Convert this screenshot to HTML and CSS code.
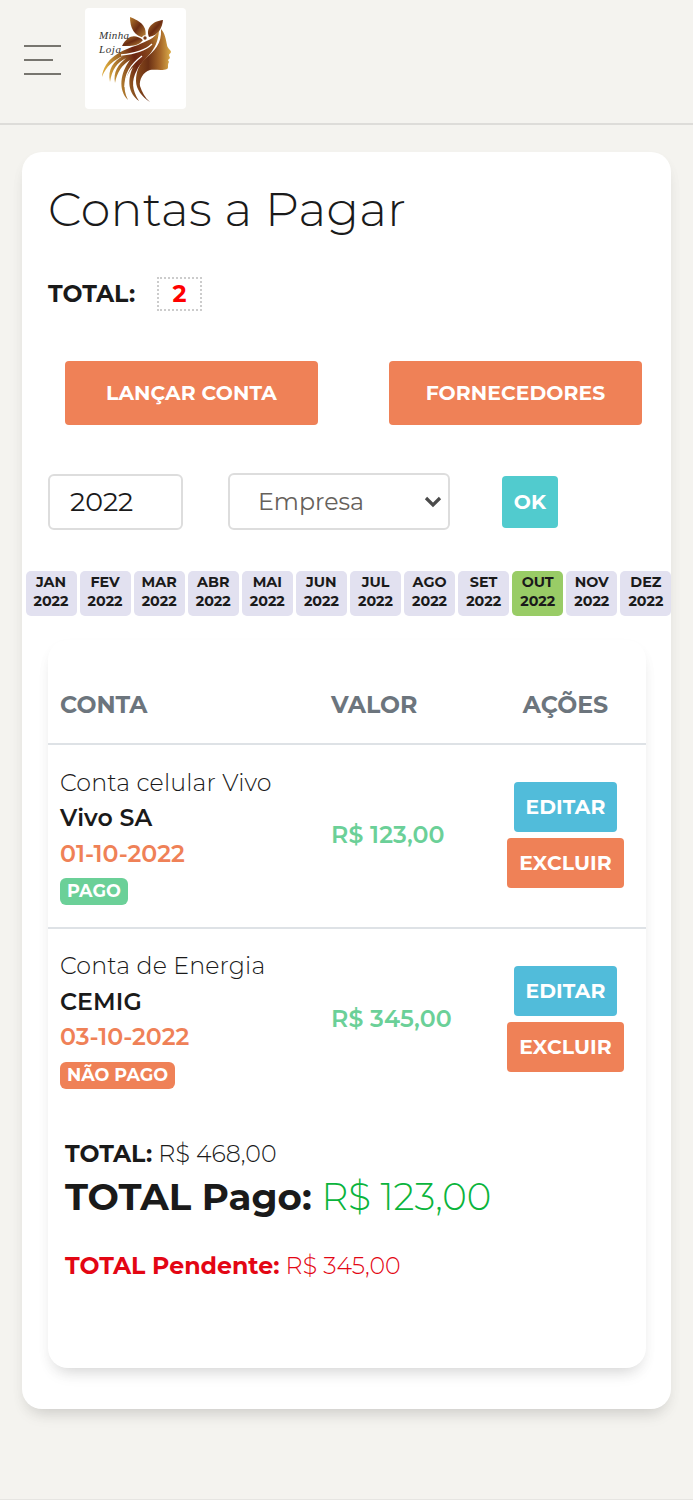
FILE: index.html
```html
<!DOCTYPE html>
<html lang="pt-br">
  <head>
    <meta charset="utf-8" />
    <meta name="viewport" content="width=device-width, initial-scale=1.0" />
    <title>Contas a Pagar</title>
    <link rel="stylesheet" href="styles.css">
  </head>

  <body>
    <header class="topbar">
      <button class="menu-toggle" type="button" aria-label="Menu">
        <span></span>
        <span class="short"></span>
        <span></span>
      </button>
      <div class="logo">
        <svg viewBox="0 0 101 101" width="101" height="101">
          <defs>
            <linearGradient id="face" x1="0" x2="1" y1="0" y2="0">
              <stop offset="0" stop-color="#8a4c1c" />
              <stop offset="0.35" stop-color="#6a2f14" />
              <stop offset="0.7" stop-color="#a8692a" />
              <stop offset="1" stop-color="#dcae4a" />
            </linearGradient>
            <linearGradient id="hair" x1="0" x2="1" y1="0.3" y2="0">
              <stop offset="0" stop-color="#d9a73c" />
              <stop offset="0.35" stop-color="#8a5020" />
              <stop offset="0.5" stop-color="#6b2412" />
              <stop offset="0.8" stop-color="#8a4b1c" />
              <stop offset="1" stop-color="#c9923a" />
            </linearGradient>
            <linearGradient id="petal" x1="0" x2="1" y1="0" y2="1">
              <stop offset="0" stop-color="#b57a2c" />
              <stop offset="0.5" stop-color="#6b2c12" />
              <stop offset="1" stop-color="#c08a3a" />
            </linearGradient>
          </defs>
          <!-- face -->
          <path fill="url(#face)" d="M76 21C80 25 81 32 82 37C82 40 86 42 86 44C86 45 84 46 84 47L85 50L83 52L84 54C82 57 84 60 82 61C77 63 70 61 65 62C58 64 54 72 55 78C57 84 60 90 65 94C57 89 51 81 51 73C51 63 54 57 60 51C69 43 77 36 76 21Z" />
          <!-- hair -->
          <path fill="url(#hair)" d="M74 22C70 31 61 33 53 37C37 42 19 50 17 69C21 58 29 52 38 48C29 53 22 61 25 74C27 61 32 55 41 50C33 57 28 64 30 75C32 64 37 57 45 52C35 65 33 82 43 92C37 80 39 69 48 59C42 72 43 85 54 93C47 82 46 73 52 62C57 51 73 45 74 22Z" />
          <path fill="none" stroke="#fff" stroke-width="1.3" d="M36 47C46 46 60 43 67 36M40 79C40 66 45 57 57 48" />
          <!-- flower -->
          <path fill="url(#petal)" d="M45 9C55 13 63 18 60 30C49 28 45 20 45 9Z" />
          <path fill="url(#petal)" d="M78 12C77 20 74 27 64 29C60 20 68 13 78 12Z" />
          <path fill="url(#petal)" d="M37 38C43 27 50 26 58 32C53 39 45 38 37 38Z" />
          <circle cx="60" cy="30" r="2.8" fill="#fff" />
          <circle cx="60" cy="30" r="1.7" fill="#7a3b15" />
          <text class="logo-text" x="14" y="31" textLength="30">Minha</text>
          <text class="logo-text" x="14" y="45" textLength="22">Loja</text>
        </svg>
      </div>
    </header>

    <main class="card page-card">
      <h1>Contas a Pagar</h1>
      <div class="count">
        <strong>TOTAL:</strong>
        <span class="count-box">2</span>
      </div>

      <div class="main-actions">
        <button class="btn btn-orange" type="button">LANÇAR CONTA</button>
        <button class="btn btn-orange" type="button">FORNECEDORES</button>
      </div>

      <form class="filters">
        <input class="year" type="text" value="2022" />
        <div class="company">
          <select>
            <option>Empresa</option>
          </select>
          <svg class="arrow" width="18" height="12" viewBox="0 0 18 12">
            <path d="M2 2L9 9L16 2" fill="none" stroke="#4b4b4b" stroke-width="3.2" />
          </svg>
        </div>
        <button class="btn btn-teal" type="button">OK</button>
      </form>

      <nav class="months">
        <a>JAN<br />2022</a>
        <a>FEV<br />2022</a>
        <a>MAR<br />2022</a>
        <a>ABR<br />2022</a>
        <a>MAI<br />2022</a>
        <a>JUN<br />2022</a>
        <a>JUL<br />2022</a>
        <a>AGO<br />2022</a>
        <a>SET<br />2022</a>
        <a class="active">OUT<br />2022</a>
        <a>NOV<br />2022</a>
        <a>DEZ<br />2022</a>
      </nav>

      <section class="card list-card">
        <table>
          <thead>
            <tr>
              <th class="col-conta">CONTA</th>
              <th class="col-valor">VALOR</th>
              <th class="col-acoes">AÇÕES</th>
            </tr>
          </thead>
          <tbody>
            <tr>
              <td>
                <div class="desc">Conta celular Vivo</div>
                <div class="name">Vivo SA</div>
                <div class="date">01-10-2022</div>
                <span class="badge badge-green">PAGO</span>
              </td>
              <td class="value">R$ 123,00</td>
              <td class="actions">
                <button class="btn btn-blue" type="button">EDITAR</button>
                <button class="btn btn-orange" type="button">EXCLUIR</button>
              </td>
            </tr>
            <tr>
              <td>
                <div class="desc">Conta de Energia</div>
                <div class="name">CEMIG</div>
                <div class="date">03-10-2022</div>
                <span class="badge badge-orange">NÃO PAGO</span>
              </td>
              <td class="value">R$ 345,00</td>
              <td class="actions">
                <button class="btn btn-blue" type="button">EDITAR</button>
                <button class="btn btn-orange" type="button">EXCLUIR</button>
              </td>
            </tr>
          </tbody>
        </table>

        <div class="totals">
          <div class="total"><strong>TOTAL:</strong> <span>R$ 468,00</span></div>
          <div class="paid"><strong>TOTAL Pago:</strong> <span>R$ 123,00</span></div>
          <div class="pending"><strong>TOTAL Pendente:</strong> <span>R$ 345,00</span></div>
        </div>
      </section>
    </main>
    <footer class="footer"></footer>
  </body>
</html>
```
FILE: styles.css
```css
* {
  box-sizing: border-box;
}

body {
  margin: 0;
  height: 1500px;
  display: flex;
  flex-direction: column;
  overflow: hidden;
  background-color: #f4f3ef;
  color: #1a1a1a;
  font-family: Montserrat, Inter, sans-serif;
  font-size: 23.7px;
}

button,
input,
select {
  font-family: inherit;
}

.topbar {
  display: flex;
  align-items: center;
  height: 125px;
  padding: 0 24px 6px;
  border-bottom: 2px solid #dddcd9;
}

.menu-toggle {
  display: flex;
  flex-direction: column;
  gap: 12px;
  width: 37px;
  margin-top: 2px;
  padding: 0;
  border: 0;
  background: none;
}

.menu-toggle span {
  height: 2px;
  background-color: #77756f;
}

.menu-toggle .short {
  width: 29px;
}

.logo {
  width: 101px;
  height: 101px;
  margin-left: 24px;
  border-radius: 4px;
  background-color: #fff;
}

.logo svg {
  display: block;
}

.logo-text {
  font: italic 11px "Liberation Serif", serif;
  fill: #333;
}

.card {
  border-radius: 20px;
  background-color: #fff;
  box-shadow: 0 10px 17px -8px rgba(0, 0, 0, 0.17), 0 6px 14px rgba(0, 0, 0, 0.03);
}

.page-card {
  width: 649px;
  height: 1257px;
  margin: 27px 0 0 22px;
  padding: 27px 25px 0 26px;
}

h1 {
  margin: 0;
  height: 60px;
  line-height: 60px;
  font-size: 47.5px;
  font-weight: 300;
  letter-spacing: 0.3px;
}

.count {
  display: flex;
  align-items: center;
  height: 34px;
  margin-top: 38px;
}

.count strong {
  width: 109px;
  padding-bottom: 2px;
}

.count-box {
  width: 45px;
  height: 34px;
  border: 2px dotted #ccc;
  color: #f00;
  font-weight: 700;
  line-height: 29px;
  text-align: center;
}

.btn {
  padding: 0 0 1px;
  border: 0;
  border-radius: 4px;
  color: #fff;
  font-size: 20.3px;
  font-weight: 700;
  letter-spacing: 0.1px;
  white-space: nowrap;
}

.btn-orange {
  background-color: #ef8157;
}

.btn-teal {
  background-color: #51cbce;
}

.btn-blue {
  background-color: #51bcda;
}

.main-actions {
  display: flex;
  gap: 71px;
  margin: 50px 0 0 17px;
}

.main-actions .btn {
  flex: none;
  width: 253px;
  height: 64px;
}

.filters {
  display: flex;
  align-items: center;
  height: 57px;
  margin-top: 48px;
}

.year,
.company select {
  border: 2px solid #ddd;
  border-radius: 6px;
  background-color: #fff;
}

.year {
  width: 135px;
  height: 56px;
  padding: 0 20px;
  color: #1a1a1a;
  font-size: 26.8px;
}

.company {
  position: relative;
  margin-left: 45px;
}

.company select {
  display: block;
  width: 222px;
  height: 57px;
  padding: 0 28px;
  appearance: none;
  color: #66615b;
  font-size: 23.7px;
}

/* sits over the select box */
.arrow {
  position: absolute;
  top: 23px;
  right: 8px;
}

.btn-teal {
  width: 56px;
  height: 52px;
  margin-left: 52px;
}

.months {
  display: grid;
  grid-template-columns: repeat(12, 51px);
  justify-content: space-between;
  width: 646px;
  margin: 41px 0 0 -22.5px;
}

.months a {
  height: 45px;
  padding-top: 2px;
  border-radius: 5px;
  background-color: #e2e1f0;
  font-size: 14.3px;
  font-weight: 700;
  line-height: 18.5px;
  text-align: center;
}

.months .active {
  background-color: #99cc66;
}

.list-card {
  height: 728px;
  margin-top: 24px;
  padding-top: 25px;
}

table {
  width: 598px;
  border-collapse: collapse;
  table-layout: fixed;
}

th {
  height: 79px;
  padding: 0 12px;
  border-bottom: 2px solid #dee2e6;
  color: #6c757d;
  font-size: 23.7px;
  font-weight: 700;
  text-align: left;
}

.col-conta {
  width: 271px;
}

.col-valor {
  width: 166px;
}

.col-acoes {
  width: 161px;
  text-align: center;
}

td {
  height: 184px;
  padding: 0 12px 2px;
}

tbody tr + tr td {
  padding-bottom: 4px;
  border-top: 2px solid #dee2e6;
}

.desc,
.name,
.date {
  height: 35.5px;
  line-height: 35px;
  white-space: nowrap;
}

.desc {
  font-weight: 300;
  letter-spacing: 0.15px;
}

.name {
  font-weight: 600;
  letter-spacing: 0.1px;
}

.date {
  color: #ef8157;
  font-weight: 600;
}

.badge {
  display: block;
  width: max-content;
  height: 27px;
  margin-top: 7px;
  padding: 0 7px;
  border-radius: 6px;
  color: #fff;
  font-size: 17.6px;
  font-weight: 700;
  line-height: 25px;
}

.badge-green {
  background-color: #6bd098;
}

.badge-orange {
  background-color: #ef8157;
}

.value {
  padding-bottom: 4px;
  color: #6bd098;
  font-weight: 600;
  letter-spacing: 0.1px;
  white-space: nowrap;
}

.actions .btn {
  display: block;
  height: 50px;
  margin: 0 auto;
}

.actions .btn-blue {
  width: 103px;
  margin-bottom: 6px;
}

.actions .btn-orange {
  width: 117px;
}

.totals {
  padding: 24px 17px;
}

.totals span {
  font-weight: 300;
}

.total {
  line-height: 36px;
}

.paid {
  font-size: 37.2px;
  line-height: 50px;
}

.paid span {
  color: #0ab43c;
}

.pending {
  margin-top: 26px;
  color: #e30613;
  line-height: 36px;
}

.footer {
  margin-top: auto;
  border-top: 1px solid #e6e5e2;
}
```
